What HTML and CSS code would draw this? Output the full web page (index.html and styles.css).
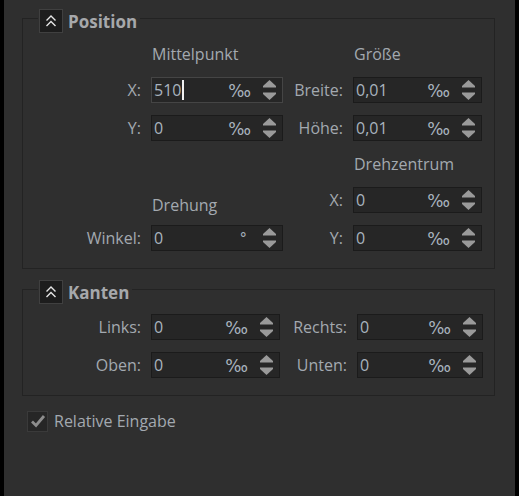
FILE: index.html
```html
<!DOCTYPE html>
<html>
<head>
<meta charset="utf-8">
<link rel="stylesheet" href="styles.css">
</head>
<body>
<div class="panel">
  <fieldset class="group group-position">
    <legend class="group-title">
      <span class="collapse-btn"><svg width="14" height="14" viewBox="0 0 14 14"><polyline points="2.5,6.5 7,2 11.5,6.5" /><polyline points="2.5,12 7,7.5 11.5,12" /></svg></span>
      <span class="title-text">Position</span>
    </legend>
    <div class="grid grid-pos">
      <div class="heading c2 r1">Mittelpunkt</div>
      <div class="heading c4 r1">Größe</div>

      <label class="lbl c1 r2">X:</label>
      <div class="field focused c2 r2"><span class="val">510<span class="caret"></span></span><span class="unit">‰</span><span class="spin"><svg width="13" height="20" viewBox="0 0 13 20"><path d="M6.5 0 L13 6 L13 7.5 L0 7.5 L0 6 Z"/><path d="M0 12.5 L13 12.5 L13 14 L6.5 20 L0 14 Z"/></svg></span></div>
      <label class="lbl c3 r2">Breite:</label>
      <div class="field c4 r2"><span class="val">0,01</span><span class="unit">‰</span><span class="spin"><svg width="13" height="20" viewBox="0 0 13 20"><path d="M6.5 0 L13 6 L13 7.5 L0 7.5 L0 6 Z"/><path d="M0 12.5 L13 12.5 L13 14 L6.5 20 L0 14 Z"/></svg></span></div>

      <label class="lbl c1 r3">Y:</label>
      <div class="field c2 r3"><span class="val">0</span><span class="unit">‰</span><span class="spin"><svg width="13" height="20" viewBox="0 0 13 20"><path d="M6.5 0 L13 6 L13 7.5 L0 7.5 L0 6 Z"/><path d="M0 12.5 L13 12.5 L13 14 L6.5 20 L0 14 Z"/></svg></span></div>
      <label class="lbl c3 r3">Höhe:</label>
      <div class="field c4 r3"><span class="val">0,01</span><span class="unit">‰</span><span class="spin"><svg width="13" height="20" viewBox="0 0 13 20"><path d="M6.5 0 L13 6 L13 7.5 L0 7.5 L0 6 Z"/><path d="M0 12.5 L13 12.5 L13 14 L6.5 20 L0 14 Z"/></svg></span></div>

      <div class="heading c4 r4">Drehzentrum</div>

      <div class="heading bottom c2 r5">Drehung</div>
      <label class="lbl c3 r5">X:</label>
      <div class="field c4 r5"><span class="val">0</span><span class="unit">‰</span><span class="spin"><svg width="13" height="20" viewBox="0 0 13 20"><path d="M6.5 0 L13 6 L13 7.5 L0 7.5 L0 6 Z"/><path d="M0 12.5 L13 12.5 L13 14 L6.5 20 L0 14 Z"/></svg></span></div>

      <label class="lbl c1 r6">Winkel:</label>
      <div class="field c2 r6"><span class="val">0</span><span class="unit deg">°</span><span class="spin"><svg width="13" height="20" viewBox="0 0 13 20"><path d="M6.5 0 L13 6 L13 7.5 L0 7.5 L0 6 Z"/><path d="M0 12.5 L13 12.5 L13 14 L6.5 20 L0 14 Z"/></svg></span></div>
      <label class="lbl c3 r6">Y:</label>
      <div class="field c4 r6"><span class="val">0</span><span class="unit">‰</span><span class="spin"><svg width="13" height="20" viewBox="0 0 13 20"><path d="M6.5 0 L13 6 L13 7.5 L0 7.5 L0 6 Z"/><path d="M0 12.5 L13 12.5 L13 14 L6.5 20 L0 14 Z"/></svg></span></div>
    </div>
  </fieldset>

  <fieldset class="group group-edges">
    <legend class="group-title">
      <span class="collapse-btn"><svg width="14" height="14" viewBox="0 0 14 14"><polyline points="2.5,6.5 7,2 11.5,6.5" /><polyline points="2.5,12 7,7.5 11.5,12" /></svg></span>
      <span class="title-text">Kanten</span>
    </legend>
    <div class="grid grid-edges">
      <label class="lbl c1 r1">Links:</label>
      <div class="field c2 r1"><span class="val">0</span><span class="unit">‰</span><span class="spin"><svg width="13" height="20" viewBox="0 0 13 20"><path d="M6.5 0 L13 6 L13 7.5 L0 7.5 L0 6 Z"/><path d="M0 12.5 L13 12.5 L13 14 L6.5 20 L0 14 Z"/></svg></span></div>
      <label class="lbl c3 r1">Rechts:</label>
      <div class="field c4 r1"><span class="val">0</span><span class="unit">‰</span><span class="spin"><svg width="13" height="20" viewBox="0 0 13 20"><path d="M6.5 0 L13 6 L13 7.5 L0 7.5 L0 6 Z"/><path d="M0 12.5 L13 12.5 L13 14 L6.5 20 L0 14 Z"/></svg></span></div>

      <label class="lbl c1 r2">Oben:</label>
      <div class="field c2 r2"><span class="val">0</span><span class="unit">‰</span><span class="spin"><svg width="13" height="20" viewBox="0 0 13 20"><path d="M6.5 0 L13 6 L13 7.5 L0 7.5 L0 6 Z"/><path d="M0 12.5 L13 12.5 L13 14 L6.5 20 L0 14 Z"/></svg></span></div>
      <label class="lbl c3 r2">Unten:</label>
      <div class="field c4 r2"><span class="val">0</span><span class="unit">‰</span><span class="spin"><svg width="13" height="20" viewBox="0 0 13 20"><path d="M6.5 0 L13 6 L13 7.5 L0 7.5 L0 6 Z"/><path d="M0 12.5 L13 12.5 L13 14 L6.5 20 L0 14 Z"/></svg></span></div>
    </div>
  </fieldset>

  <div class="check-row">
    <span class="checkbox"><svg width="16" height="16" viewBox="0 0 16 16"><polyline points="2,8.5 6,12.5 14,3" /></svg></span>
    <span class="check-label">Relative Eingabe</span>
  </div>
</div>
</body>
</html>
```

FILE: styles.css
```css
html, body {
  margin: 0;
  padding: 0;
  background: #000;
  height: 100%;
}

body {
  font-family: "Open Sans", "Noto Sans", sans-serif;
  font-size: 16px;
  color: #a3a9b0;
}

.panel {
  margin: 0 4px;
  height: 496px;
  background: #2f2f2f;
  box-sizing: border-box;
  padding: 4px 20px 0 18px;
  display: flex;
  flex-direction: column;
}

.group {
  margin: 0;
  padding: 10px 0 17px 0;
  border: 1px solid #232323;
  min-width: 0;
}

.group-edges {
  margin-top: 6px;
}

.group-title {
  display: flex;
  align-items: center;
  margin-left: 15px;
  padding: 5px 3px 0 1px;
  height: 24px;
  box-sizing: content-box;
}

.collapse-btn {
  width: 22px;
  height: 22px;
  background: #1d1d1d;
  border: 1px solid #404040;
  display: flex;
  align-items: center;
  justify-content: center;
}

.collapse-btn svg polyline {
  fill: none;
  stroke: #e6e6e6;
  stroke-width: 1.4;
}

.title-text {
  margin-left: 5px;
  font-weight: 700;
  font-size: 17px;
  color: #a6a8ab;
}

.grid {
  display: grid;
  row-gap: 12px;
}

.grid-pos {
  grid-template-columns: 128px 132px 70px 129px;
  grid-template-rows: 22px 26px 26px 22px 26px 26px;
}

.grid-edges {
  grid-template-columns: 128px 129px 77px 126px;
  grid-template-rows: 26px 26px;
}

.c1 { grid-column: 1; }
.c2 { grid-column: 2; }
.c3 { grid-column: 3; }
.c4 { grid-column: 4; }
.r1 { grid-row: 1; }
.r2 { grid-row: 2; }
.r3 { grid-row: 3; }
.r4 { grid-row: 4; }
.r5 { grid-row: 5; }
.r6 { grid-row: 6; }

.heading {
  padding-left: 1px;
  line-height: 22px;
  align-self: center;
}

.heading.bottom {
  align-self: end;
  margin-bottom: -3px;
}

.lbl {
  text-align: right;
  padding-right: 10px;
  line-height: 26px;
}

.field {
  display: flex;
  align-items: center;
  height: 26px;
  box-sizing: border-box;
  background: #262626;
  border: 1px solid #1b1b1b;
  padding: 0 6px 0 2px;
  color: #a8b3be;
}

.field.focused {
  border-color: #454545;
}

.val {
  flex: 1;
  display: flex;
  align-items: center;
}

.caret {
  display: inline-block;
  width: 2px;
  height: 20px;
  background: #f0f0f0;
  margin-left: 1px;
}

.unit {
  width: 26px;
  text-align: right;
  margin-right: 12px;
  font-family: "DejaVu Sans", sans-serif;
  font-size: 17px;
  line-height: 20px;
  padding-top: 2px;
}

.unit.deg {
  padding-right: 4px;
  width: 22px;
  font-size: 15px;
}

.spin {
  display: flex;
}

.spin svg path {
  fill: #9a9a9a;
}

.check-row {
  display: flex;
  align-items: center;
  margin-top: 14px;
  margin-left: 5px;
}

.checkbox {
  width: 19px;
  height: 19px;
  background: #262626;
  border: 1px solid #3a3a3a;
  display: flex;
  align-items: center;
  justify-content: center;
}

.checkbox svg polyline {
  fill: none;
  stroke: #8d8d8d;
  stroke-width: 2.8;
}

.check-label {
  margin-left: 6px;
}
```
